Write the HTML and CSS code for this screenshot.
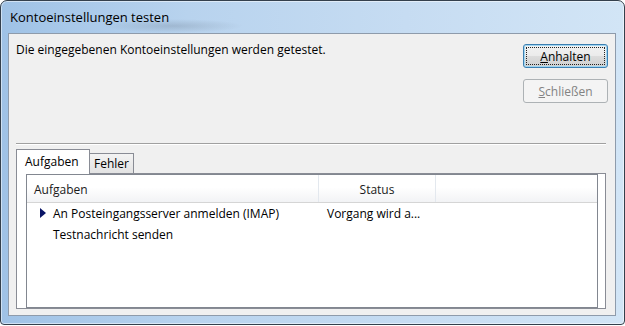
FILE: index.html
```html
<!DOCTYPE html>
<html lang="de">
<head>
  <meta charset="UTF-8" />
  <title>Kontoeinstellungen testen</title>
  <link rel="stylesheet" href="styles.css">
</head>
<body>
  <div class="window">
    <div class="titlebar">Kontoeinstellungen testen</div>

    <div class="client">
      <div class="top">
        <p class="message">Die eingegebenen Kontoeinstellungen werden getestet.</p>
        <div class="buttons">
          <button class="btn default"><u>A</u>nhalten</button>
          <button class="btn" disabled><u>S</u>chließen</button>
        </div>
      </div>

      <hr class="separator">

      <div class="tabs">
        <div class="tab-strip">
          <span class="tab active">Aufgaben</span>
          <span class="tab">Fehler</span>
        </div>
        <div class="tab-panel">
          <div class="listview">
            <div class="lv-header">
              <div class="col col-task">Aufgaben</div>
              <div class="col col-status">Status</div>
              <div class="col col-rest"></div>
            </div>
            <div class="lv-row">
              <span class="cell-task"><span class="marker current"></span>An Posteingangsserver anmelden (IMAP)</span>
              <span class="cell-status">Vorgang wird a...</span>
            </div>
            <div class="lv-row">
              <span class="cell-task"><span class="marker"></span>Testnachricht senden</span>
              <span class="cell-status"></span>
            </div>
          </div>
        </div>
      </div>
    </div>
  </div>
</body>
</html>
```

FILE: styles.css
```css
body {
  margin: 0;
  background: #fff;
  font-family: "Open Sans", "Noto Sans", sans-serif;
  font-size: 12px;
  color: #000;
}

.window {
  width: 625px;
  height: 325px;
  box-sizing: border-box;
  display: flex;
  flex-direction: column;
  padding: 0 8px 8px 7px;
  border: 1px solid #34404d;
  border-radius: 7px 7px 4px 4px;
  background: linear-gradient(to right, #9fc2e6 0%, #b8d3ee 30%, #c6dcf2 65%, #d2e5f6 100%);
  box-shadow: inset 0 0 0 1px rgba(255, 255, 255, 0.5);
}

.titlebar {
  height: 32px;
  line-height: 32px;
  padding-left: 2px;
  font-size: 13px;
  color: #000;
  background: radial-gradient(ellipse 70px 7px at 165px 25px, rgba(70, 80, 95, 0.2), transparent);
}

.client {
  flex: 1;
  display: flex;
  flex-direction: column;
  border: 1px solid #8e9bab;
  background: #f0f0f0;
}

.top {
  height: 109px;
  box-sizing: border-box;
  display: flex;
  justify-content: space-between;
  padding: 10px 7px 0 7px;
}

.message {
  margin: -2px 0 0;
  line-height: 16px;
}

.buttons {
  display: flex;
  flex-direction: column;
  gap: 11px;
}

.btn {
  position: relative;
  width: 85px;
  height: 24px;
  padding: 0;
  font: inherit;
  color: #000;
  border: 1px solid #707070;
  border-radius: 3px;
  background: linear-gradient(#f2f2f2 0%, #ebebeb 50%, #dddddd 50%, #cfcfcf 100%);
}

.btn.default {
  border-color: #3c7fb1;
  box-shadow: inset 0 0 0 1px #9fd6f3;
}

.btn.default::after {
  content: "";
  position: absolute;
  inset: 2px;
  border: 1px dotted #222;
}

.btn:disabled {
  color: #838383;
  border-color: #adb2b5;
  background: #f4f4f4;
}

.separator {
  height: 0;
  margin: 0 9px 0 7px;
  border: 0;
  border-top: 1px solid #a0a0a0;
  border-bottom: 1px solid #fff;
}

.tabs {
  flex: 1;
  display: flex;
  flex-direction: column;
  margin: 4px 9px 6px 7px;
}

.tab-strip {
  display: flex;
  align-items: flex-end;
  height: 24px;
}

.tab {
  box-sizing: border-box;
  border: 1px solid #898c95;
  border-bottom: 0;
}

.tab.active {
  position: relative;
  z-index: 1;
  width: 74px;
  height: 25px;
  margin-bottom: -1px;
  padding: 3px 0 0 8px;
  background: #fff;
}

.tab:not(.active) {
  width: 44px;
  height: 20px;
  border-left: 0;
  padding: 1px 0 0 4px;
  background: linear-gradient(#f3f3f3, #e3e3e3);
}

.tab-panel {
  flex: 1;
  display: flex;
  padding: 0 7px 0 9px;
  border: 1px solid #898c95;
  background: #fff;
}

.listview {
  flex: 1;
  border: 1px solid #828790;
  background: #fff;
}

.lv-header {
  display: flex;
  height: 27px;
  border-bottom: 1px solid #d5d5d5;
  background: linear-gradient(#ffffff 0%, #ffffff 45%, #f2f3f5 100%);
  color: #1a1a1a;
}

.col {
  box-sizing: border-box;
  padding-top: 7px;
  line-height: 16px;
  border-right: 1px solid #e3e8ee;
}

.col-task {
  width: 292px;
  padding-left: 7px;
}

.col-status {
  width: 117px;
  text-align: center;
}

.col-rest {
  flex: 1;
  border-right: 0;
}

.lv-row {
  display: flex;
  height: 21px;
  line-height: 21px;
}

.cell-task {
  box-sizing: border-box;
  width: 292px;
  padding-left: 13px;
  display: flex;
  align-items: center;
}

.marker {
  width: 6px;
  height: 10px;
  margin-right: 7px;
  flex-shrink: 0;
}

.marker.current {
  width: 0;
  height: 0;
  border-left: 6px solid #0a1466;
  border-top: 5px solid transparent;
  border-bottom: 5px solid transparent;
  margin-top: -1px;
}

.cell-status {
  padding-left: 8px;
}
```
